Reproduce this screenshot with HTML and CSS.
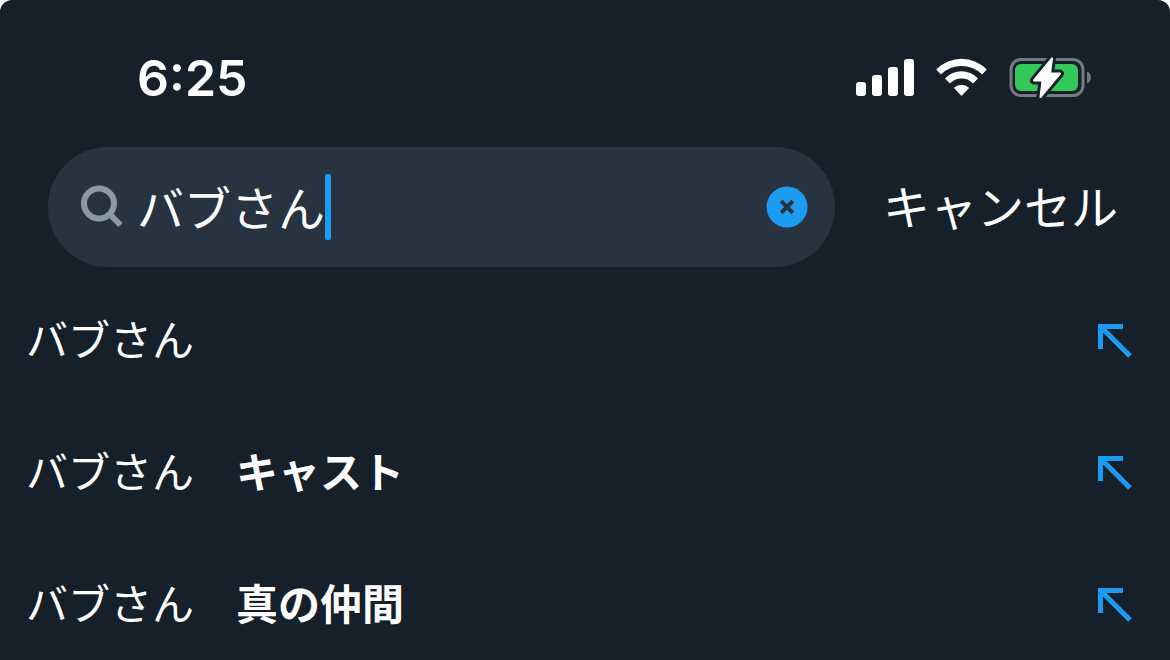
FILE: index.html
```html
<!DOCTYPE html>
<html lang="ja">
<head>
<meta charset="utf-8">
<meta name="viewport" content="width=device-width, initial-scale=1">
<title>検索</title>
<link rel="stylesheet" href="styles.css">
</head>
<body>
<div class="app">
  <header class="status">
    <time class="clock">6:25</time>
    <div class="indicators">
      <svg class="signal" width="58" height="40" viewBox="0 0 58 40" aria-hidden="true">
        <rect x="0" y="24" width="10" height="14" rx="3"/>
        <rect x="16" y="17" width="10" height="21" rx="3"/>
        <rect x="32" y="9" width="10" height="29" rx="3"/>
        <rect x="48" y="1" width="10" height="37" rx="3"/>
      </svg>
      <svg class="wifi" width="51" height="40" viewBox="0 0 51 40" aria-hidden="true">
        <path d="M.7 11A35.2 35.2 0 0 1 50.3 11Q50.7 11.500 50.3 12L46.500 16Q46 16.400 45.500 16A28.800 28.800 0 0 0 5.500 16Q5 16.400 4.500 16L.7 12Q.3 11.500 .7 11Z"/>
        <path d="M9.500 20A22.600 22.600 0 0 1 41.500 20Q42 20.500 41.500 21L37.600 25Q37 25.500 36.500 25A16 16 0 0 0 14.500 25Q14 25.500 13.400 25L9.500 21Q9 20.500 9.500 20Z"/>
        <path d="M18.400 29.400A10.500 10.500 0 0 1 32.600 29.400Q33.200 30 32.600 30.600L26.200 37.300Q25.500 38 24.800 37.300L18.400 30.600Q17.800 30 18.400 29.400Z"/>
      </svg>
      <svg class="battery" width="83" height="44" viewBox="0 0 83 44" role="img" aria-label="充電中">
        <rect class="battery-case" x="2" y="3.500" width="72" height="36" rx="10"/>
        <path class="battery-nub" d="M78 15.500C83.300 17.500 83.300 25.500 78 27.500Z"/>
        <rect class="battery-level" x="6" y="8" width="63" height="27" rx="6"/>
        <path class="bolt-gap" d="M43 2.500L25 24.500H33.500L31.500 41L51 17.500H41Z"/>
        <path class="bolt" d="M43 2.500L25 24.500H33.500L31.500 41L51 17.500H41Z"/>
      </svg>
    </div>
  </header>

  <form class="search" role="search">
    <div class="field">
      <svg class="lens" width="44" height="44" viewBox="0 0 44 44" aria-hidden="true">
        <circle cx="19" cy="18.500" r="15"/>
        <path d="M29.500 29L40.500 40"/>
      </svg>
      <input class="query" type="text" value="バブさん" aria-label="検索">
      <span class="caret"></span>
      <button class="clear" type="reset" aria-label="クリア">
        <svg width="42" height="42" viewBox="0 0 42 42" aria-hidden="true">
          <circle cx="21" cy="21" r="20.500"/>
          <path d="M15.200 15.200L26.800 26.800M26.800 15.200L15.200 26.800"/>
        </svg>
      </button>
    </div>
    <button class="cancel" type="button">キャンセル</button>
  </form>

  <ul class="suggestions">
    <li class="row">
      <a class="term" href="#">バブさん</a>
      <button class="fill" type="button" aria-label="バブさんを入力">
        <svg width="36" height="36" viewBox="0 0 36 36" aria-hidden="true"><path d="M26 4.500H3.500V27M3.500 4.500L33 34"/></svg>
      </button>
    </li>
    <li class="row">
      <a class="term" href="#">バブさん　<b>キャスト</b></a>
      <button class="fill" type="button" aria-label="バブさん キャストを入力">
        <svg width="36" height="36" viewBox="0 0 36 36" aria-hidden="true"><path d="M26 4.500H3.500V27M3.500 4.500L33 34"/></svg>
      </button>
    </li>
    <li class="row">
      <a class="term" href="#">バブさん　<b>真の仲間</b></a>
      <button class="fill" type="button" aria-label="バブさん 真の仲間を入力">
        <svg width="36" height="36" viewBox="0 0 36 36" aria-hidden="true"><path d="M26 4.500H3.500V27M3.500 4.500L33 34"/></svg>
      </button>
    </li>
  </ul>
</div>
</body>
</html>
```
FILE: styles.css
```css
:root {
  --bg: #16202a;
  --field: #273340;
  --blue: #1d9bf0;
  --grey: #8b98a5;
}

* { box-sizing: border-box; }

body {
  margin: 0;
  background: #fff;
  color: #fff;
  font-family: "Noto Sans CJK JP", sans-serif;
}

.app {
  min-height: 100vh;
  background: var(--bg);
  border-radius: 12px 12px 0 0;
}

svg { display: block; flex: none; }

button {
  padding: 0;
  border: 0;
  background: none;
  color: inherit;
  font: inherit;
  cursor: pointer;
}

.status {
  display: flex;
  align-items: center;
  justify-content: space-between;
  padding: 48px 78px 39px 137px;
}

.clock {
  font: 600 50px/60px Inter, sans-serif;
}

.indicators {
  display: flex;
  align-items: center;
  gap: 22px;
}

.signal, .wifi { fill: #fff; }

.battery-case { fill: none; stroke: #747a81; stroke-width: 3; }
.battery-nub { fill: #747a81; }
.battery-level { fill: #34c759; }
.bolt-gap { fill: var(--bg); stroke: var(--bg); stroke-width: 8; stroke-linejoin: round; }
.bolt { fill: #fff; stroke: #fff; stroke-width: 2; stroke-linejoin: round; }

.search {
  display: flex;
  align-items: center;
  gap: 48px;
  padding: 0 52px 0 48px;
}

.field {
  display: flex;
  flex: 1;
  align-items: center;
  min-width: 0;
  height: 120px;
  padding: 0 27px 0 32px;
  border-radius: 60px;
  background: var(--field);
}

.lens { fill: none; stroke: var(--grey); stroke-width: 6; }

.query {
  width: 4em;
  height: 72px;
  margin-left: 13px;
  padding: 0 0 4px;
  border: 0;
  outline: 0;
  background: none;
  color: inherit;
  font: 400 47px/68px "Noto Sans CJK JP", sans-serif;
}

.caret {
  width: 6px;
  height: 66px;
  border-radius: 2px;
  background: var(--blue);
}

.clear { margin-left: auto; }
.clear circle { fill: var(--blue); }
.clear path { stroke: var(--field); stroke-width: 4; }

.cancel {
  padding-bottom: 4px;
  font-size: 47px;
  line-height: 68px;
  white-space: nowrap;
}

.suggestions {
  margin: 0;
  padding: 7px 0 0;
  list-style: none;
}

.row {
  display: flex;
  align-items: center;
  justify-content: space-between;
  height: 132px;
  padding: 0 37px 0 26px;
}

.term {
  padding-bottom: 4px;
  color: inherit;
  font-size: 42px;
  line-height: 60px;
  text-decoration: none;
}

.fill svg {
  fill: none;
  stroke: var(--blue);
  stroke-width: 5;
}
```
